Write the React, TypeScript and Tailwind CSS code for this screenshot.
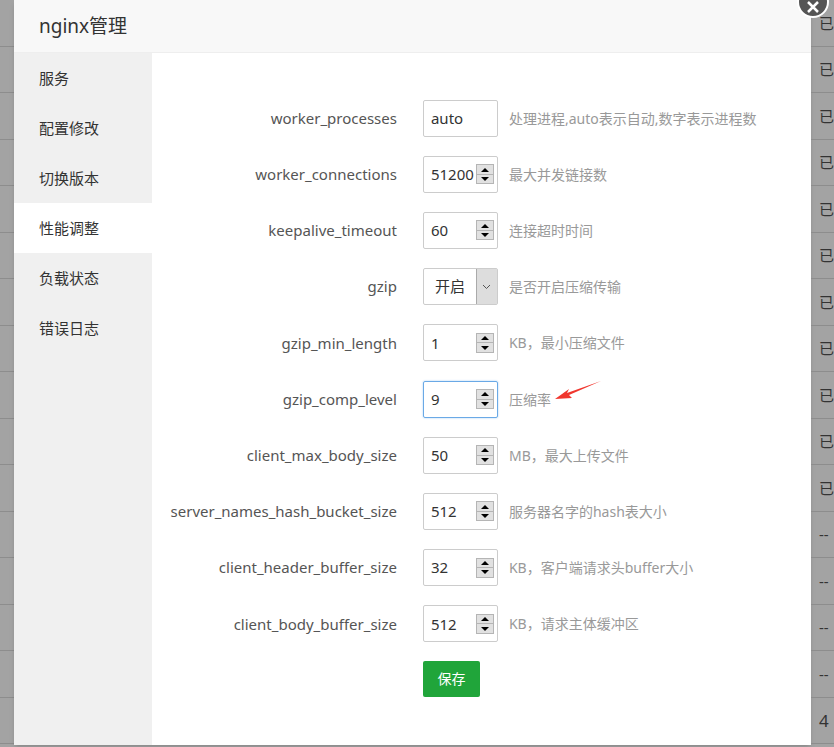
import React from "react";

const rows: { label: string; value: string; hint: string; type?: "text" | "select" | "num"; focus?: boolean }[] = [
  { label: "worker_processes", value: "auto", hint: "处理进程,auto表示自动,数字表示进程数", type: "text" },
  { label: "worker_connections", value: "51200", hint: "最大并发链接数" },
  { label: "keepalive_timeout", value: "60", hint: "连接超时时间" },
  { label: "gzip", value: "开启", hint: "是否开启压缩传输", type: "select" },
  { label: "gzip_min_length", value: "1", hint: "KB，最小压缩文件" },
  { label: "gzip_comp_level", value: "9", hint: "压缩率", focus: true },
  { label: "client_max_body_size", value: "50", hint: "MB，最大上传文件" },
  { label: "server_names_hash_bucket_size", value: "512", hint: "服务器名字的hash表大小" },
  { label: "client_header_buffer_size", value: "32", hint: "KB，客户端请求头buffer大小" },
  { label: "client_body_buffer_size", value: "512", hint: "KB，请求主体缓冲区" },
];

const menu = ["服务", "配置修改", "切换版本", "性能调整", "负载状态", "错误日志"];
const bgRight = ["已", "已", "已", "已", "已", "已", "已", "已", "已", "已", "已", "--", "--", "--", "--", "4"];

function Spinner() {
  return (
    <div className="absolute right-[3px] top-1/2 -translate-y-1/2 w-[18px] h-[20px] bg-[#e1e1e1] border border-[#b5b5b5] flex flex-col">
      <div className="flex-1 flex items-center justify-center border-b border-[#b5b5b5]">
        <div className="w-0 h-0 border-l-[4px] border-r-[4px] border-b-[4px] border-l-transparent border-r-transparent border-b-black" />
      </div>
      <div className="flex-1 flex items-center justify-center">
        <div className="w-0 h-0 border-l-[4px] border-r-[4px] border-t-[4px] border-l-transparent border-r-transparent border-t-black" />
      </div>
    </div>
  );
}

export default function App() {
  const font = { fontFamily: '"Microsoft YaHei","Noto Sans","Noto Sans CJK SC",sans-serif' };
  return (
    <div className="w-[834px] h-[747px] bg-[#a3a3a3] flex overflow-hidden relative" style={font}>
      <div className="w-[14px] flex flex-col">
        {Array.from({ length: 16 }).map((_, i) => (
          <div key={i} className="h-[46.5px] border-b border-[#8d8d8d]" />
        ))}
      </div>
      <div className="w-[800px] h-[745px] bg-white flex flex-col shadow-md">
        <div className="h-[53px] bg-[#f8f8f8] border-b border-[#eeeeee] flex items-center pl-[25px] text-[19px] text-[#333]">
          nginx管理
        </div>
        <div className="flex flex-1">
          <div className="w-[138px] bg-[#f0f0f0] flex flex-col">
            {menu.map((m, i) => (
              <div key={m} className={`h-[50px] flex items-center pl-[25px] text-[15px] text-[#333] ${i === 3 ? "bg-white" : ""}`}>
                {m}
              </div>
            ))}
          </div>
          <div className="flex-1 pt-[37px] flex flex-col">
            {rows.map((r) => (
              <div key={r.label} className="h-[56.2px] flex items-center">
                <div className="w-[245px] text-right text-[15px] text-[#555] pr-[0px]">{r.label}</div>
                <div
                  className={`ml-[26px] w-[75px] h-[37px] rounded-[2px] border relative flex items-center pl-[7px] text-[15px] text-[#333] ${
                    r.focus ? "border-[#6aa9e6] shadow-[0_0_2px_#9cc8f2]" : "border-[#cccccc]"
                  } ${r.type === "select" ? "pl-[11px]" : ""}`}
                >
                  {r.value}
                  {r.type === "select" ? (
                    <div className="absolute right-0 top-0 bottom-0 w-[21px] bg-[#dddddd] border-l border-[#aaaaaa] flex items-center justify-center">
                      <svg width="9" height="6" viewBox="0 0 9 6"><path d="M1 1l3.5 3.5L8 1" stroke="#555" fill="none" /></svg>
                    </div>
                  ) : r.type === "text" ? null : (
                    <Spinner />
                  )}
                </div>
                <div className="ml-[11px] text-[14px] text-[#999] relative">
                  {r.hint}
                  {r.focus && (
                    <svg className="absolute left-[44px] top-[-9px]" width="50" height="24" viewBox="0 0 50 24">
                      <path d="M48 1 L14 13 L16 9 L2 19 L19 18 L16 15 Z" fill="#f0362e" />
                    </svg>
                  )}
                </div>
              </div>
            ))}
            <div className="ml-[271px] mt-[9px]">
              <button className="w-[57px] h-[36px] bg-[#20a53a] text-white text-[14px] rounded-[2px]">保存</button>
            </div>
          </div>
        </div>
      </div>
      <div className="flex-1 flex flex-col">
        {bgRight.map((t, i) => (
          <div key={i} className={`h-[46.5px] border-b border-[#8d8d8d] flex items-center pl-[8px] text-[15px] text-[#333] ${i === 15 ? "text-[17px]" : ""}`}>
            {t}
          </div>
        ))}
      </div>
      <div className="absolute left-[797px] top-[-14px] w-[32px] h-[32px] rounded-full bg-[#555] border-2 border-white flex items-center justify-center">
        <svg width="14" height="14" viewBox="0 0 14 14" className="mt-[10px]"><path d="M2 2l10 10M12 2L2 12" stroke="white" strokeWidth="2.5" /></svg>
      </div>
    </div>
  );
}
